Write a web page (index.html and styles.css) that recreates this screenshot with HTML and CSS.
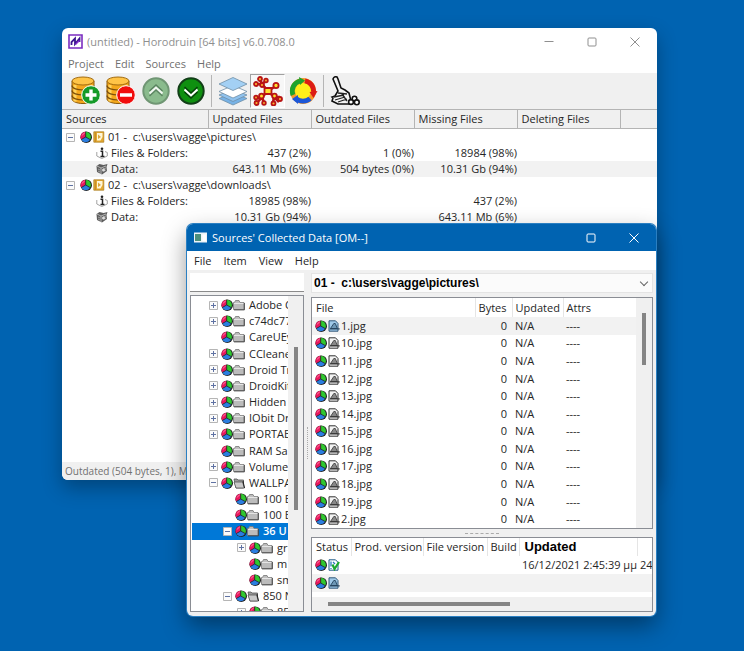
FILE: index.html
```html
<!DOCTYPE html>
<html lang="en">
<head>
<meta charset="utf-8">
<title>Horodruin</title>
<link rel="stylesheet" href="styles.css">
</head>
<body>
<svg class="defs" aria-hidden="true">
  <defs>
    <symbol id="pie" viewBox="0 0 12 12">
      <circle cx="6.200" cy="6.200" r="5.800" fill="#222"/>
      <path d="M5.700 6V.8A5.200 5.200 0 0 0 1.200 8.600z" fill="#e8175d"/>
      <path d="M5.700 6V.8A5.200 5.200 0 0 1 10.200 8.600z" fill="#2fc82f"/>
      <path d="M5.700 6L1.200 8.600a5.200 5.200 0 0 0 9 0z" fill="#2a7de0"/>
      <path d="M5.700 .8V6L1.200 8.600M5.700 6l4.500 2.600" fill="none" stroke="#222" stroke-width=".7"/>
      <path d="M2.300 4.500Q3 2.500 4.800 2" fill="none" stroke="#ff8fb4" stroke-width=".8"/>
    </symbol>
    <symbol id="folder" viewBox="0 0 12 12">
      <path d="M.5 3.500h1l1-2h3.500l1 2h4v7H.5z" fill="#bcbcbc" stroke="#777" stroke-width=".8"/>
      <path d="M1 4.400h9.500" stroke="#eee" stroke-width=".9"/>
      <path d="M11.400 4v6.900H1" fill="none" stroke="#444" stroke-width=".9"/>
    </symbol>
    <symbol id="folder-open" viewBox="0 0 12 12">
      <path d="M1 2h3l1 1h5.500v8H3z" fill="#999" stroke="#555" stroke-width=".8"/>
      <path d="M1 5h8.500l2 6H3z" fill="#c9c9c9" stroke="#555" stroke-width=".8"/>
      <path d="M10 4l1.500 7" stroke="#222"/>
    </symbol>
    <symbol id="plus" viewBox="0 0 9 9">
      <path d="M.5.5h8v8h-8z" fill="#fbfbfb" stroke="#b5b5b5"/>
      <path d="M2 4.500h5M4.500 2v5" stroke="#5f72a3"/>
    </symbol>
    <symbol id="minus" viewBox="0 0 9 9">
      <path d="M.5.5h8v8h-8z" fill="#fbfbfb" stroke="#b5b5b5"/>
      <path d="M2 4.500h5" stroke="#5f72a3"/>
    </symbol>
    <symbol id="source" viewBox="0 0 12 12">
      <path d="M.8.8h10v10.400h-10z" fill="#e4a92f" stroke="#a87820" stroke-width=".7"/>
      <path d="M4 2h5.500v4l-2 3.500H4z" fill="#fff6d8"/>
      <path d="M5 3.500l3 2.500-3 2z" fill="#d9a63c"/>
      <path d="M2.500 1v10" stroke="#c18624" stroke-width=".8"/>
    </symbol>
    <symbol id="info" viewBox="0 0 12 12">
      <circle cx="6" cy="1.800" r="1.300" fill="#222"/>
      <path d="M4.500 4.300h2v5M4.500 9.500h4" fill="none" stroke="#222" stroke-width="1.500"/>
      <path d="M.8 5v4l5 2.500 5.500-2.500V5.500L9 4.500" fill="none" stroke="#999" stroke-width=".9"/>
    </symbol>
    <symbol id="data" viewBox="0 0 12 12">
      <path d="M.5 3l3-2 4 1 4-1-1 3 .5 4-5 3.500L1 9z" fill="#5d5d5d"/>
      <path d="M1 3l4 2 5-2M5 5v6" fill="none" stroke="#ccc" stroke-width=".8"/>
      <path d="M2 6l2 1M2 8l2 1M7 6l3-1M7 8l3-1" stroke="#aaa" stroke-width=".9"/>
      <circle cx="7.500" cy="7" r="1.500" fill="#ddd"/>
    </symbol>
    <symbol id="image" viewBox="0 0 12 12">
      <path d="M1 .8h6.500l2.500 2.700v7.700H1z" fill="#f2f2f2" stroke="#333"/>
      <path d="M2.500 8.500L5.800 3.500h1.500l2 5z" fill="#888" stroke="#444" stroke-width=".9"/>
      <path d="M2 8.900h9.700" stroke="#333" stroke-width="1.200"/>
    </symbol>
    <symbol id="image-sel" viewBox="0 0 12 12">
      <path d="M1 .8h6.500l2.500 2.700v7.700H1z" fill="#9fc9e8" stroke="#33597a"/>
      <path d="M2.500 8.500L5.800 3.500h1.500l2 5z" fill="#6d97b5" stroke="#24435d" stroke-width=".9"/>
      <path d="M2 8.900h9.700" stroke="#24435d" stroke-width="1.200"/>
    </symbol>
    <symbol id="checked" viewBox="0 0 12 12">
      <path d="M1 .8h6.500l2.500 2.500v7.900H1z" fill="#fff" stroke="#1f5a86"/>
      <path d="M3 2.500v5M3 9v1M5 3l2 2" stroke="#2c78b8" stroke-width="1.300"/>
      <path d="M4.500 5.500l2 4.500L11 3" fill="none" stroke="#1ba82d" stroke-width="2.200"/>
    </symbol>
    <symbol id="database" viewBox="0 0 30 30">
      <path d="M1 5v18c0 2.500 5 4.500 11 4.500S23 25.500 23 23V5z" fill="#f5a81c" stroke="#8b5a0a"/>
      <path d="M4 9v16.500" stroke="#ffd35c" stroke-width="3"/>
      <path d="M1 9.500c0 6 22 6 22 0M1 14.500c0 6 22 6 22 0M1 19.500c0 6 22 6 22 0" fill="none" stroke="#7c4f0a" stroke-width="1.200"/>
      <ellipse cx="12" cy="5" rx="11" ry="4" fill="#ffc447" stroke="#a26b10"/>
    </symbol>
  </defs>
</svg>

<main class="desktop">
  <section class="window main-window" aria-label="Horodruin">
    <header class="titlebar">
      <svg class="app-icon" viewBox="0 0 15 15"><path d="M1 1h13v13H1z" fill="#fff" stroke="#7a2bc0" stroke-width="1.600"/><path d="M3.500 11V8L7 4.500V10l4.500-5.500V8" fill="none" stroke="#3c1490" stroke-width="1.800"/><path d="M7.500 10.500l4-4" stroke="#8a2fd0" stroke-width="1.300"/></svg>
      <h1 class="caption">(untitled) - Horodruin [64 bits] v6.0.708.0</h1>
      <button class="win-btn" aria-label="Minimize"><svg viewBox="0 0 10 10"><path d="M.5 4.500h9"/></svg></button>
      <button class="win-btn" aria-label="Maximize"><svg viewBox="0 0 10 10"><rect x="1" y="1" width="8" height="8" rx="1"/></svg></button>
      <button class="win-btn" aria-label="Close"><svg viewBox="0 0 10 10"><path d="M.5.5l9 9M9.500.5l-9 9"/></svg></button>
    </header>
    <nav class="menu"><button>Project</button><button>Edit</button><button>Sources</button><button>Help</button></nav>
    <div class="toolbar">
      <button aria-label="Add source"><svg viewBox="0 0 30 30"><use href="#database"/><circle cx="20" cy="19" r="9.300" fill="#159a28" stroke="#fff"/><path d="M20 13.500v11M14.500 19h11" stroke="#fff" stroke-width="3.400"/></svg></button>
      <button aria-label="Remove source"><svg viewBox="0 0 30 30"><use href="#database"/><circle cx="20" cy="19" r="9.300" fill="#f10d0d" stroke="#fff"/><path d="M14 19h12" stroke="#fff" stroke-width="3.400"/></svg></button>
      <button aria-label="Move up" disabled><svg viewBox="0 0 30 30"><circle cx="15" cy="15" r="12.700" fill="#8abb8d" stroke="#709674" stroke-width="2"/><path d="M8.500 15l6.500-6 6.500 6M8.500 20l6.500-6 6.500 6" fill="none" stroke="#5b8461" stroke-width="1.500"/><path d="M8.500 17.500l6.500-6 6.500 6" fill="none" stroke="#f2f7f2" stroke-width="2"/></svg></button>
      <button aria-label="Move down"><svg viewBox="0 0 30 30"><circle cx="15" cy="15" r="12.700" fill="#0f9010" stroke="#123f18" stroke-width="2"/><path d="M8.500 11l6.500 6 6.500-6M8.500 16l6.500 6 6.500-6" fill="none" stroke="#063d0a" stroke-width="1.500"/><path d="M8.500 13.500l6.500 6 6.500-6" fill="none" stroke="#fff" stroke-width="2"/></svg></button>
      <span class="sep"></span>
      <button aria-label="Layers"><svg viewBox="0 0 30 30"><g stroke="#6e8ea6" stroke-width=".8"><path d="M1 22.500l14-6 14 6-14 6.500z" fill="#77b2e6"/><path d="M1 19l14-6 14 6-14 6.500z" fill="#8fc2ee"/><path d="M1 15.500l14-6 14 6L15 22z" fill="#fff"/><path d="M1 8l14-6.500L29 8l-14 6.500z" fill="#a3d0f4"/></g></svg></button>
      <button class="pressed" aria-label="Tree view" aria-pressed="true"><svg viewBox="0 0 30 30"><g fill="none" stroke="#b81414" stroke-width="2.600"><path d="M15 15L9 8 3 8M9 8L7 3M9 8l4-3M15 15l8-5M15 15l-6 6-5 1M9 21l-5 6M9 21l2 6M15 15l6 6 6 0M21 21l-1 6M21 21l5 5"/></g><g fill="#ffb52e" stroke="#b81414" stroke-width="1.800"><path d="M11.500 12h7v6h-7z" fill="#ffe02e"/><circle cx="9" cy="9" r="2"/><circle cx="3" cy="8" r="2"/><circle cx="7" cy="3" r="2"/><circle cx="13" cy="4.500" r="1.800"/><circle cx="23" cy="9.500" r="2.600" fill="#ffe02e"/><circle cx="8.500" cy="20" r="2.400" fill="#ffe02e"/><circle cx="3" cy="21.500" r="1.800"/><circle cx="3.500" cy="27" r="2"/><circle cx="11" cy="27" r="1.800"/><circle cx="21.500" cy="20" r="2.300" fill="#ffe02e"/><circle cx="27" cy="23" r="2"/><circle cx="20.500" cy="27.500" r="2"/></g></svg></button>
      <button aria-label="Synchronize"><svg viewBox="0 0 30 30"><circle cx="15" cy="15" r="13" fill="#f59a2a"/><circle cx="15" cy="15" r="8" fill="#ffee1a"/><g fill="none" stroke-width="4.800"><path d="M5 19A10.500 10.500 0 0 1 12 5" stroke="#1fa32c"/><path d="M17 4.800A10.500 10.500 0 0 1 25.500 16" stroke="#dc1c14"/><path d="M22 22.500A10.500 10.500 0 0 1 8 22.500" stroke="#1c57d8"/></g><path d="M11 1l6 3.500-5 4.500z" fill="#1fa32c"/><path d="M29.500 15l-4 7-4-6z" fill="#dc1c14"/><path d="M10 28l-6-5 6-4z" fill="#1c57d8"/></svg></button>
      <span class="sep"></span>
      <button aria-label="Clean"><svg viewBox="0 0 30 30"><path d="M3 3q1-3 4-2l1 2 3 9 4 2 4 3 2 8-2 3H8l-6-3 1-3-1-1 3-1 3-5z" fill="#f4f4f4" stroke="#111" stroke-width="1.600"/><path d="M8 17l9 1M4 21l10-2M5 24l10-3M8 26l9-3M12 18l5 7" fill="none" stroke="#222" stroke-width="1.300"/><g fill="#fff" stroke="#111" stroke-width="1.600"><circle cx="21" cy="26" r="2.400"/><circle cx="24.500" cy="22.500" r="2.300"/><circle cx="26.800" cy="26.300" r="2.400"/></g></svg></button>
    </div>
    <div class="sources">
      <table class="source-table">
        <colgroup><col class="c-name"><col class="c-stat"><col class="c-stat"><col class="c-stat"><col class="c-stat"><col></colgroup>
        <thead><tr><th>Sources</th><th>Updated Files</th><th>Outdated Files</th><th>Missing Files</th><th>Deleting Files</th><th></th></tr></thead>
        <tbody>
          <tr><td colspan="2"><span class="node"><svg class="exp"><use href="#minus"/></svg><svg class="ico far"><use href="#pie"/></svg><svg class="ico"><use href="#source"/></svg><span class="label">01 - &nbsp;c:\users\vagge\pictures\</span></span></td><td></td><td></td><td></td><td></td></tr>
          <tr><td><span class="node leaf"><svg class="ico"><use href="#info"/></svg><span class="label">Files &amp; Folders:</span></span></td><td>437 (2%)</td><td>1 (0%)</td><td>18984 (98%)</td><td></td><td></td></tr>
          <tr class="shade"><td><span class="node leaf"><svg class="ico"><use href="#data"/></svg><span class="label">Data:</span></span></td><td>643.11 Mb (6%)</td><td>504 bytes (0%)</td><td>10.31 Gb (94%)</td><td></td><td></td></tr>
          <tr><td colspan="2"><span class="node"><svg class="exp"><use href="#minus"/></svg><svg class="ico far"><use href="#pie"/></svg><svg class="ico"><use href="#source"/></svg><span class="label">02 - &nbsp;c:\users\vagge\downloads\</span></span></td><td></td><td></td><td></td><td></td></tr>
          <tr><td><span class="node leaf"><svg class="ico"><use href="#info"/></svg><span class="label">Files &amp; Folders:</span></span></td><td>18985 (98%)</td><td></td><td>437 (2%)</td><td></td><td></td></tr>
          <tr><td><span class="node leaf"><svg class="ico"><use href="#data"/></svg><span class="label">Data:</span></span></td><td>10.31 Gb (94%)</td><td></td><td>643.11 Mb (6%)</td><td></td><td></td></tr>
        </tbody>
      </table>
    </div>
    <footer class="status">Outdated (504 bytes, 1), M</footer>
  </section>

  <section class="window data-window" aria-label="Sources' Collected Data">
    <header class="titlebar">
      <svg class="app-icon" viewBox="0 0 15 15"><path d="M1 2.500h13v10H1z" fill="#eef4f8"/><path d="M2 4h6v7H2z" fill="#4b8f7c"/><path d="M9.500 4.500h3.500v6.500H9.500z" fill="#fff"/></svg>
      <h2 class="caption">Sources' Collected Data [OM--]</h2>
      <button class="win-btn" aria-label="Maximize"><svg viewBox="0 0 10 10"><rect x="1" y="1" width="8" height="8" rx="1"/></svg></button>
      <button class="win-btn" aria-label="Close"><svg viewBox="0 0 10 10"><path d="M.5.5l9 9M9.500.5l-9 9"/></svg></button>
    </header>
    <nav class="menu"><button>File</button><button>Item</button><button>View</button><button>Help</button></nav>
    <div class="client">
      <div class="side">
        <input class="filter" type="text" aria-label="Filter">
        <div class="tree-box">
          <ul class="tree">
            <li><svg class="exp"><use href="#plus"/></svg><svg class="ico"><use href="#pie"/></svg><svg class="ico"><use href="#folder"/></svg><span class="label">Adobe C</span></li>
            <li><svg class="exp"><use href="#plus"/></svg><svg class="ico"><use href="#pie"/></svg><svg class="ico"><use href="#folder"/></svg><span class="label">c74dc77</span></li>
            <li><svg class="exp"></svg><svg class="ico"><use href="#pie"/></svg><svg class="ico"><use href="#folder"/></svg><span class="label">CareUEy</span></li>
            <li><svg class="exp"><use href="#plus"/></svg><svg class="ico"><use href="#pie"/></svg><svg class="ico"><use href="#folder"/></svg><span class="label">CCleane</span></li>
            <li><svg class="exp"><use href="#plus"/></svg><svg class="ico"><use href="#pie"/></svg><svg class="ico"><use href="#folder"/></svg><span class="label">Droid Tr</span></li>
            <li><svg class="exp"><use href="#plus"/></svg><svg class="ico"><use href="#pie"/></svg><svg class="ico"><use href="#folder"/></svg><span class="label">DroidKit</span></li>
            <li><svg class="exp"><use href="#plus"/></svg><svg class="ico"><use href="#pie"/></svg><svg class="ico"><use href="#folder"/></svg><span class="label">Hidden</span></li>
            <li><svg class="exp"><use href="#plus"/></svg><svg class="ico"><use href="#pie"/></svg><svg class="ico"><use href="#folder"/></svg><span class="label">IObit Dr</span></li>
            <li><svg class="exp"><use href="#plus"/></svg><svg class="ico"><use href="#pie"/></svg><svg class="ico"><use href="#folder"/></svg><span class="label">PORTAB</span></li>
            <li><svg class="exp"></svg><svg class="ico"><use href="#pie"/></svg><svg class="ico"><use href="#folder"/></svg><span class="label">RAM Sa</span></li>
            <li><svg class="exp"><use href="#plus"/></svg><svg class="ico"><use href="#pie"/></svg><svg class="ico"><use href="#folder"/></svg><span class="label">Volume</span></li>
            <li><svg class="exp"><use href="#minus"/></svg><svg class="ico"><use href="#pie"/></svg><svg class="ico"><use href="#folder-open"/></svg><span class="label">WALLPA</span></li>
            <li class="l2"><svg class="exp"></svg><svg class="ico"><use href="#pie"/></svg><svg class="ico"><use href="#folder"/></svg><span class="label">100 B</span></li>
            <li class="l2"><svg class="exp"></svg><svg class="ico"><use href="#pie"/></svg><svg class="ico"><use href="#folder"/></svg><span class="label">100 B</span></li>
            <li class="l2 selected"><svg class="exp"><use href="#minus"/></svg><svg class="ico"><use href="#pie"/></svg><svg class="ico"><use href="#folder"/></svg><span class="label">36 U</span></li>
            <li class="l3"><svg class="exp"><use href="#plus"/></svg><svg class="ico"><use href="#pie"/></svg><svg class="ico"><use href="#folder"/></svg><span class="label">gr</span></li>
            <li class="l3"><svg class="exp"></svg><svg class="ico"><use href="#pie"/></svg><svg class="ico"><use href="#folder"/></svg><span class="label">m</span></li>
            <li class="l3"><svg class="exp"></svg><svg class="ico"><use href="#pie"/></svg><svg class="ico"><use href="#folder"/></svg><span class="label">sm</span></li>
            <li class="l2"><svg class="exp"><use href="#minus"/></svg><svg class="ico"><use href="#pie"/></svg><svg class="ico"><use href="#folder-open"/></svg><span class="label">850 N</span></li>
            <li class="l3"><svg class="exp"><use href="#plus"/></svg><svg class="ico"><use href="#pie"/></svg><svg class="ico"><use href="#folder"/></svg><span class="label">85</span></li>
          </ul>
          <div class="vbar"><span class="thumb"></span></div>
        </div>
      </div>
      <div class="vsplit"><span></span></div>
      <div class="content">
        <div class="combo"><select aria-label="Source"><option>01 - &nbsp;c:\users\vagge\pictures\</option></select></div>
        <div class="files">
          <table class="file-table">
            <colgroup><col><col class="c-bytes"><col class="c-upd"><col class="c-attr"></colgroup>
            <thead><tr><th>File</th><th>Bytes</th><th>Updated</th><th>Attrs</th></tr></thead>
            <tbody>
              <tr class="shade"><td><span class="file"><svg class="ico"><use href="#pie"/></svg><svg class="ico"><use href="#image-sel"/></svg>1.jpg</span></td><td>0</td><td>N/A</td><td>----</td></tr>
              <tr><td><span class="file"><svg class="ico"><use href="#pie"/></svg><svg class="ico"><use href="#image"/></svg>10.jpg</span></td><td>0</td><td>N/A</td><td>----</td></tr>
              <tr><td><span class="file"><svg class="ico"><use href="#pie"/></svg><svg class="ico"><use href="#image"/></svg>11.jpg</span></td><td>0</td><td>N/A</td><td>----</td></tr>
              <tr><td><span class="file"><svg class="ico"><use href="#pie"/></svg><svg class="ico"><use href="#image"/></svg>12.jpg</span></td><td>0</td><td>N/A</td><td>----</td></tr>
              <tr><td><span class="file"><svg class="ico"><use href="#pie"/></svg><svg class="ico"><use href="#image"/></svg>13.jpg</span></td><td>0</td><td>N/A</td><td>----</td></tr>
              <tr><td><span class="file"><svg class="ico"><use href="#pie"/></svg><svg class="ico"><use href="#image"/></svg>14.jpg</span></td><td>0</td><td>N/A</td><td>----</td></tr>
              <tr><td><span class="file"><svg class="ico"><use href="#pie"/></svg><svg class="ico"><use href="#image"/></svg>15.jpg</span></td><td>0</td><td>N/A</td><td>----</td></tr>
              <tr><td><span class="file"><svg class="ico"><use href="#pie"/></svg><svg class="ico"><use href="#image"/></svg>16.jpg</span></td><td>0</td><td>N/A</td><td>----</td></tr>
              <tr><td><span class="file"><svg class="ico"><use href="#pie"/></svg><svg class="ico"><use href="#image"/></svg>17.jpg</span></td><td>0</td><td>N/A</td><td>----</td></tr>
              <tr><td><span class="file"><svg class="ico"><use href="#pie"/></svg><svg class="ico"><use href="#image"/></svg>18.jpg</span></td><td>0</td><td>N/A</td><td>----</td></tr>
              <tr><td><span class="file"><svg class="ico"><use href="#pie"/></svg><svg class="ico"><use href="#image"/></svg>19.jpg</span></td><td>0</td><td>N/A</td><td>----</td></tr>
              <tr><td><span class="file"><svg class="ico"><use href="#pie"/></svg><svg class="ico"><use href="#image"/></svg>2.jpg</span></td><td>0</td><td>N/A</td><td>----</td></tr>
            </tbody>
          </table>
          <div class="vbar"><span class="thumb"></span></div>
        </div>
        <div class="hsplit"><span></span></div>
        <div class="versions">
          <table class="version-table">
            <colgroup><col class="v-status"><col class="v-prod"><col class="v-file"><col class="v-build"><col class="v-upd"><col></colgroup>
            <thead><tr><th>Status</th><th>Prod. version</th><th>File version</th><th>Build</th><th class="strong">Updated</th><th></th></tr></thead>
            <tbody>
              <tr><td><span class="file"><svg class="ico"><use href="#pie"/></svg><svg class="ico"><use href="#checked"/></svg></span></td><td></td><td></td><td></td><td>16/12/2021 2:45:39 μμ</td><td>24</td></tr>
              <tr class="shade"><td><span class="file"><svg class="ico"><use href="#pie"/></svg><svg class="ico"><use href="#image-sel"/></svg></span></td><td></td><td></td><td></td><td></td><td></td></tr>
            </tbody>
          </table>
          <div class="hbar"><span class="thumb"></span></div>
        </div>
      </div>
    </div>
  </section>
</main>
</body>
</html>
```
FILE: styles.css
```css
* { box-sizing: border-box; }

body {
  margin: 0;
  background: #0063b1;
  color: #262626;
  font: 11px/16px "Open Sans", "Noto Sans", sans-serif;
}

button, input, select { font: inherit; color: inherit; }
button { padding: 0; border: 0; background: none; }
svg { display: block; flex: none; }
.defs { position: absolute; width: 0; height: 0; }

.desktop {
  position: relative;
  height: 100vh;
  overflow: hidden;
}

/* Windows */
.window {
  position: absolute;
  display: flex;
  flex-direction: column;
  overflow: hidden;
  border-radius: 6px;
  background: #fff;
}
.main-window {
  inset: 28px 87px 171px 62px;
  box-shadow: 0 8px 20px rgba(0, 0, 0, .3);
}
.data-window {
  inset: 224px 88px 35px 187px;
  background: #f0f0f0;
  box-shadow: 0 0 0 1px #2a7fc2, 0 10px 24px rgba(0, 0, 0, .42);
}

.titlebar {
  display: flex;
  align-items: center;
  flex: none;
  height: 27px;
  padding: 0 1px 0 6px;
  color: #8f8f8f;
}
.app-icon { width: 15px; height: 15px; }
.caption {
  flex: 1;
  margin: 0 0 0 4px;
  font-size: 11px;
  font-weight: 400;
  white-space: nowrap;
}
.win-btn {
  display: grid;
  place-items: center;
  width: 43px;
  height: 27px;
}
.win-btn svg {
  width: 10px;
  height: 10px;
  fill: none;
  stroke: currentColor;
}
.data-window .titlebar { background: #0063b1; color: #fff; }

.menu {
  display: flex;
  align-items: center;
  flex: none;
  gap: 12px;
  height: 19px;
  padding-left: 7px;
  background: #fff;
}
.main-window .menu {
  gap: 11px;
  height: 18px;
  padding-left: 6px;
  color: #707070;
}

/* Toolbar */
.toolbar {
  display: flex;
  align-items: center;
  flex: none;
  height: 36px;
  padding-left: 6px;
  background: #f0f0f0;
}
.toolbar button {
  display: grid;
  place-items: center;
  width: 35px;
  height: 34px;
}
.toolbar svg { width: 30px; height: 30px; }
.toolbar .pressed {
  border: 1px solid #fff;
  border-top-color: #a0a0a0;
  border-left-color: #a0a0a0;
  background: #f7f7f7;
}
.sep {
  width: 7px;
  height: 32px;
  background: linear-gradient(#b5b5b5, #b5b5b5) center / 1px 100% no-repeat;
}

/* Tables */
table {
  width: 100%;
  border-collapse: collapse;
  table-layout: fixed;
}
th, td {
  padding: 0;
  font-weight: 400;
  text-align: left;
  white-space: nowrap;
}
.shade { background: #f2f2f2; }

.sources { flex: 1; min-height: 0; }
.source-table th {
  height: 19px;
  padding-left: 4px;
  border: solid #b4b4b4;
  border-width: 1px 1px 1px 0;
  background: #f0f0f0;
  line-height: 18px;
}
.source-table th:last-child { border-right: 0; }
.source-table td { height: 16px; text-align: right; }
.source-table td:first-child { text-align: left; }
.c-name { width: 146px; }
.c-stat { width: 103px; }

.node, .file, .tree li {
  display: flex;
  align-items: center;
}
.node { padding-left: 4px; }
.leaf { padding-left: 34px; }
.exp { width: 9px; height: 9px; margin-right: 3px; }
.ico { width: 12px; height: 12px; }
.far { margin: 0 1px 0 2px; }
.label { margin-left: 3px; }

.status {
  flex: none;
  height: 18px;
  padding: 1px 0 0 3px;
  background: #f0f0f0;
  color: #707070;
  font-size: 10px;
}

/* Collected data */
.client {
  display: flex;
  flex: 1;
  min-height: 0;
  padding: 3px 3px 4px;
}
.side {
  display: flex;
  flex-direction: column;
  gap: 3px;
  width: 114px;
}
.filter {
  width: 100%;
  height: 19px;
  padding: 0 3px;
  border: 0;
  border-bottom: 1px solid #8a8a8a;
  background: #fff;
}
.tree-box {
  display: flex;
  flex: 1;
  min-height: 0;
  border: 1px solid #8a8d94;
  background: #fff;
  overflow: hidden;
}
.tree {
  display: flex;
  flex-direction: column;
  flex: 1;
  min-width: 0;
  height: 103%;
  margin: 0;
  padding: 1px 0 0 1px;
  list-style: none;
}
.tree li {
  flex: 1;
  min-height: 0;
  padding-left: 17px;
  overflow: hidden;
  white-space: nowrap;
}
.tree .label { margin-left: 4px; }
.tree .l2 { padding-left: 31px; }
.tree .l3 { padding-left: 45px; }
.tree .selected {
  background: #0078d7;
  color: #fff;
  font-weight: 600;
}
.vbar {
  flex: none;
  width: 16px;
  background: #f0f0f0;
}
.thumb { display: block; background: #858585; }
.vbar .thumb { width: 4px; margin: 0 auto; }
.tree-box .vbar { width: 15px; }
.tree-box .thumb { height: 163px; margin-top: 51px; }
.files .thumb { height: 52px; margin-top: 15px; }

.vsplit {
  display: grid;
  place-items: center;
  width: 7px;
}
.vsplit span { height: 32px; border-left: 1px dotted #aaa; }

.content {
  display: flex;
  flex-direction: column;
  flex: 1;
  min-width: 0;
}
.combo {
  position: relative;
  height: 20px;
  margin-bottom: 4px;
  border: 1px solid #e4e4e4;
  background: #fbfbfb;
}
.combo select {
  width: 100%;
  height: 18px;
  padding: 0 2px;
  border: 0;
  background: transparent;
  appearance: none;
  color: #000;
  font: bold 12px/18px "Liberation Sans", sans-serif;
}
.combo::after {
  content: "";
  position: absolute;
  top: 5px;
  right: 5px;
  width: 5px;
  height: 5px;
  border: solid #666;
  border-width: 0 1px 1px 0;
  transform: rotate(45deg);
  pointer-events: none;
}

.files, .versions {
  border: 1px solid #8a8d94;
  background: #fff;
  overflow: hidden;
}
.files { display: flex; flex: 1; min-height: 0; }
.file-table { flex: 1; height: 100%; }
.file-table th { height: 19px; }
.file-table th, .version-table th { padding-left: 4px; }
.file-table td, .version-table td { padding-left: 3px; }
.file-table th + th { padding-left: 3px; }
.file-table th + th, .version-table th + th { border-left: 1px solid #e5e5e5; }
.file-table th:nth-child(2), .file-table td:nth-child(2) {
  padding-right: 5px;
  text-align: right;
}
.c-bytes { width: 37px; }
.c-upd { width: 51px; }
.c-attr { width: 73px; }
.file { gap: 1px; }

.hsplit {
  display: grid;
  place-items: center;
  height: 8px;
}
.hsplit span { width: 34px; border-top: 1px dashed #aaa; }

.versions {
  display: flex;
  flex-direction: column;
  justify-content: space-between;
  height: 75px;
}
.version-table th { height: 18px; }
.version-table th + th { padding-left: 3px; }
.version-table td { height: 18px; }
.version-table .strong {
  padding-left: 5px;
  color: #000;
  font: bold 13px/16px "Liberation Sans", sans-serif;
}
.v-status { width: 39px; }
.v-prod { width: 72px; }
.v-file { width: 64px; }
.v-build { width: 32px; }
.v-upd { width: 118px; }
.hbar { height: 14px; padding: 5px 0 0 16px; background: #f0f0f0; }
.hbar .thumb { width: 182px; height: 4px; }
```
